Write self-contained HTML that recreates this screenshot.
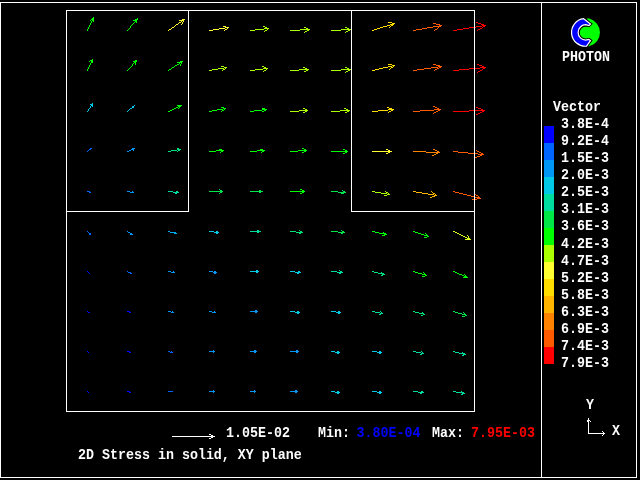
<!DOCTYPE html>
<html><head><meta charset="utf-8"><title>2D Stress in solid, XY plane</title>
<style>html,body{margin:0;padding:0;background:#000;overflow:hidden}svg{display:block}text{font-family:"Liberation Mono",monospace;font-weight:bold;font-size:13.333px;white-space:pre}</style></head><body>
<svg width="640" height="480" viewBox="0 0 640 480">
<rect width="640" height="480" fill="#000"/>
<g shape-rendering="crispEdges">
<path d="M93 17h1v1h-1zM92 18h2v1h-2zM91 19h3v1h-3zM90 20h1v1h-1zM92 20h2v1h-2zM91 21h1v1h-1zM93 21h1v1h-1zM91 22h1v1h-1zM90 23h1v1h-1zM90 24h1v1h-1zM89 25h1v1h-1zM89 26h1v1h-1zM88 27h1v1h-1zM88 28h1v1h-1zM87 29h1v1h-1zM87 30h1v1h-1z" fill="#00ff00"/>
<path d="M137 18h1v1h-1zM135 19h3v1h-3zM133 20h4v1h-4zM135 21h2v1h-2zM134 22h1v1h-1zM136 22h1v1h-1zM133 23h1v1h-1zM132 24h1v1h-1zM131 25h1v1h-1zM130 26h1v1h-1zM130 27h1v1h-1zM129 28h1v1h-1zM128 29h1v1h-1zM127 30h1v1h-1z" fill="#00ff00"/>
<path d="M182 19h3v1h-3zM179 20h5v1h-5zM181 21h1v1h-1zM183 21h1v1h-1zM179 22h2v1h-2zM182 22h1v1h-1zM178 23h1v1h-1zM182 23h1v1h-1zM176 24h2v1h-2zM181 24h1v1h-1zM175 25h1v1h-1zM174 26h1v1h-1zM172 27h2v1h-2zM171 28h1v1h-1zM169 29h2v1h-2zM168 30h1v1h-1z" fill="#ffff32"/>
<path d="M223 26h3v1h-3zM225 27h4v1h-4zM219 28h6v1h-6zM227 28h1v1h-1zM213 29h6v1h-6zM225 29h2v1h-2zM209 30h4v1h-4zM224 30h1v1h-1z" fill="#ffff32"/>
<path d="M263 26h2v1h-2zM265 27h2v1h-2zM264 28h5v1h-5zM255 29h9v1h-9zM267 29h1v1h-1zM250 30h5v1h-5zM265 30h2v1h-2zM264 31h1v1h-1z" fill="#aaff00"/>
<path d="M304 27h2v1h-2zM306 28h2v1h-2zM300 29h10v1h-10zM290 30h10v1h-10zM307 30h2v1h-2zM305 31h2v1h-2zM304 32h1v1h-1z" fill="#aaff00"/>
<path d="M345 27h2v1h-2zM347 28h2v1h-2zM341 29h10v1h-10zM331 30h10v1h-10zM348 30h2v1h-2zM346 31h2v1h-2zM345 32h1v1h-1z" fill="#aaff00"/>
<path d="M388 22h4v1h-4zM392 23h3v1h-3zM390 24h4v1h-4zM387 25h3v1h-3zM391 25h2v1h-2zM383 26h4v1h-4zM390 26h1v1h-1zM380 27h3v1h-3zM389 27h1v1h-1zM377 28h3v1h-3zM374 29h3v1h-3zM372 30h2v1h-2z" fill="#ffdc00"/>
<path d="M433 23h3v1h-3zM436 24h4v1h-4zM439 25h3v1h-3zM433 26h8v1h-8zM427 27h6v1h-6zM438 27h1v1h-1zM422 28h5v1h-5zM437 28h1v1h-1zM416 29h6v1h-6zM435 29h2v1h-2zM413 30h3v1h-3zM434 30h1v1h-1z" fill="#ff5a00"/>
<path d="M476 22h2v1h-2zM478 23h3v1h-3zM481 24h3v1h-3zM482 25h4v1h-4zM476 26h6v1h-6zM483 26h2v1h-2zM469 27h7v1h-7zM482 27h1v1h-1zM463 28h6v1h-6zM480 28h2v1h-2zM457 29h6v1h-6zM478 29h2v1h-2zM453 30h4v1h-4zM477 30h1v1h-1z" fill="#ff0000"/>
<path d="M92 59h1v1h-1zM90 60h3v1h-3zM89 61h1v1h-1zM91 61h2v1h-2zM91 62h2v1h-2zM90 63h1v1h-1zM90 64h1v1h-1zM89 65h1v1h-1zM89 66h1v1h-1zM88 67h1v1h-1zM88 68h1v1h-1zM87 69h1v1h-1zM87 70h1v1h-1z" fill="#00ff00"/>
<path d="M135 60h2v1h-2zM133 61h4v1h-4zM134 62h2v1h-2zM133 63h1v1h-1zM135 63h1v1h-1zM132 64h1v1h-1zM135 64h1v1h-1zM132 65h1v1h-1zM131 66h1v1h-1zM130 67h1v1h-1zM129 68h1v1h-1zM128 69h1v1h-1zM127 70h1v1h-1z" fill="#00ff00"/>
<path d="M180 61h3v1h-3zM177 62h5v1h-5zM179 63h1v1h-1zM181 63h1v1h-1zM177 64h2v1h-2zM180 64h1v1h-1zM175 65h2v1h-2zM180 65h1v1h-1zM174 66h1v1h-1zM172 67h2v1h-2zM171 68h1v1h-1zM169 69h2v1h-2zM168 70h1v1h-1z" fill="#00ff00"/>
<path d="M221 66h3v1h-3zM224 67h3v1h-3zM218 68h6v1h-6zM225 68h1v1h-1zM212 69h6v1h-6zM223 69h2v1h-2zM209 70h3v1h-3zM222 70h1v1h-1z" fill="#aaff00"/>
<path d="M262 66h2v1h-2zM264 67h2v1h-2zM263 68h5v1h-5zM255 69h8v1h-8zM266 69h1v1h-1zM250 70h5v1h-5zM264 70h2v1h-2zM263 71h1v1h-1z" fill="#aaff00"/>
<path d="M303 67h2v1h-2zM305 68h2v1h-2zM299 69h10v1h-10zM290 70h9v1h-9zM306 70h2v1h-2zM304 71h2v1h-2z" fill="#aaff00"/>
<path d="M345 67h2v1h-2zM347 68h2v1h-2zM341 69h10v1h-10zM331 70h10v1h-10zM348 70h2v1h-2zM346 71h2v1h-2zM345 72h1v1h-1z" fill="#aaff00"/>
<path d="M388 64h4v1h-4zM392 65h3v1h-3zM388 66h4v1h-4zM393 66h1v1h-1zM383 67h5v1h-5zM391 67h2v1h-2zM379 68h4v1h-4zM390 68h1v1h-1zM375 69h4v1h-4zM389 69h1v1h-1zM372 70h3v1h-3z" fill="#ffdc00"/>
<path d="M433 64h3v1h-3zM436 65h4v1h-4zM438 66h4v1h-4zM431 67h7v1h-7zM439 67h2v1h-2zM424 68h7v1h-7zM437 68h2v1h-2zM417 69h7v1h-7zM435 69h2v1h-2zM413 70h4v1h-4zM434 70h1v1h-1z" fill="#ff5a00"/>
<path d="M477 64h2v1h-2zM479 65h3v1h-3zM482 66h2v1h-2zM480 67h6v1h-6zM469 68h11v1h-11zM483 68h2v1h-2zM459 69h10v1h-10zM482 69h1v1h-1zM453 70h6v1h-6zM480 70h2v1h-2zM478 71h2v1h-2zM477 72h1v1h-1z" fill="#ff0000"/>
<path d="M92 103h1v1h-1zM90 104h3v1h-3zM91 105h2v1h-2zM90 106h1v1h-1zM92 106h1v1h-1zM90 107h1v1h-1zM89 108h1v1h-1zM88 109h1v1h-1zM88 110h1v1h-1zM87 111h1v1h-1z" fill="#00c8e6"/>
<path d="M134 105h1v1h-1zM132 106h2v1h-2zM132 107h2v1h-2zM130 108h2v1h-2zM129 109h1v1h-1zM128 110h1v1h-1zM127 111h1v1h-1z" fill="#00c8e6"/>
<path d="M177 105h5v1h-5zM178 106h3v1h-3zM176 107h2v1h-2zM179 107h1v1h-1zM174 108h2v1h-2zM178 108h1v1h-1zM172 109h2v1h-2zM170 110h2v1h-2zM168 111h2v1h-2z" fill="#00ff00"/>
<path d="M221 107h3v1h-3zM223 108h3v1h-3zM217 109h6v1h-6zM224 109h1v1h-1zM212 110h5v1h-5zM222 110h2v1h-2zM209 111h3v1h-3zM221 111h1v1h-1z" fill="#00ff00"/>
<path d="M262 108h3v1h-3zM262 109h5v1h-5zM254 110h8v1h-8zM264 110h2v1h-2zM250 111h4v1h-4zM262 111h2v1h-2z" fill="#00ff00"/>
<path d="M303 108h2v1h-2zM305 109h2v1h-2zM299 110h9v1h-9zM290 111h9v1h-9zM305 111h2v1h-2zM303 112h2v1h-2z" fill="#aaff00"/>
<path d="M344 108h2v1h-2zM346 109h2v1h-2zM340 110h10v1h-10zM331 111h9v1h-9zM347 111h2v1h-2zM345 112h2v1h-2z" fill="#aaff00"/>
<path d="M387 107h2v1h-2zM389 108h3v1h-3zM388 109h6v1h-6zM378 110h10v1h-10zM391 110h2v1h-2zM372 111h6v1h-6zM389 111h2v1h-2zM388 112h1v1h-1z" fill="#ffdc00"/>
<path d="M433 106h2v1h-2zM435 107h2v1h-2zM437 108h2v1h-2zM434 109h7v1h-7zM420 110h14v1h-14zM438 110h2v1h-2zM413 111h7v1h-7zM436 111h2v1h-2zM434 112h2v1h-2zM433 113h1v1h-1z" fill="#ff5a00"/>
<path d="M476 107h2v1h-2zM478 108h3v1h-3zM481 109h2v1h-2zM469 110h16v1h-16zM453 111h16v1h-16zM482 111h2v1h-2zM480 112h2v1h-2zM478 113h2v1h-2zM476 114h2v1h-2z" fill="#ff0000"/>
<path d="M90 148h2v1h-2zM89 149h2v1h-2zM88 150h1v1h-1zM87 151h1v1h-1z" fill="#0064ff"/>
<path d="M132 148h3v1h-3zM131 149h3v1h-3zM129 150h2v1h-2zM133 150h1v1h-1zM127 151h2v1h-2z" fill="#0096f5"/>
<path d="M177 148h2v1h-2zM177 149h4v1h-4zM171 150h6v1h-6zM178 150h2v1h-2zM168 151h3v1h-3zM177 151h1v1h-1z" fill="#00e07c"/>
<path d="M219 149h3v1h-3zM216 150h8v1h-8zM209 151h7v1h-7zM221 151h2v1h-2zM220 152h1v1h-1z" fill="#00ff00"/>
<path d="M260 149h3v1h-3zM257 150h8v1h-8zM250 151h7v1h-7zM262 151h2v1h-2zM261 152h1v1h-1z" fill="#00ff00"/>
<path d="M302 148h2v1h-2zM304 149h2v1h-2zM298 150h9v1h-9zM290 151h8v1h-8zM304 151h2v1h-2zM302 152h2v1h-2z" fill="#00ff00"/>
<path d="M343 149h2v1h-2zM345 150h2v1h-2zM331 151h17v1h-17zM345 152h2v1h-2zM343 153h2v1h-2z" fill="#00ff00"/>
<path d="M386 149h2v1h-2zM388 150h2v1h-2zM372 151h20v1h-20zM388 152h2v1h-2zM386 153h2v1h-2z" fill="#ffff32"/>
<path d="M433 149h2v1h-2zM435 150h2v1h-2zM413 151h13v1h-13zM437 151h2v1h-2zM426 152h14v1h-14zM436 153h2v1h-2zM434 154h2v1h-2zM432 155h2v1h-2z" fill="#ff8200"/>
<path d="M476 150h1v1h-1zM453 151h5v1h-5zM477 151h2v1h-2zM458 152h10v1h-10zM479 152h2v1h-2zM468 153h10v1h-10zM481 153h2v1h-2zM478 154h6v1h-6zM480 155h2v1h-2zM477 156h3v1h-3zM475 157h2v1h-2z" fill="#ff5a00"/>
<path d="M87 191h3v1h-3zM89 192h2v1h-2z" fill="#0064ff"/>
<path d="M127 191h3v1h-3zM132 191h1v1h-1zM130 192h4v1h-4z" fill="#0096f5"/>
<path d="M168 191h5v1h-5zM176 191h2v1h-2zM173 192h6v1h-6zM175 193h2v1h-2z" fill="#00dca0"/>
<path d="M219 189h1v1h-1zM220 190h2v1h-2zM209 191h14v1h-14zM220 192h2v1h-2zM219 193h1v1h-1z" fill="#00e646"/>
<path d="M259 190h2v1h-2zM250 191h13v1h-13zM259 192h2v1h-2z" fill="#00e646"/>
<path d="M300 189h2v1h-2zM302 190h2v1h-2zM290 191h15v1h-15zM302 192h2v1h-2zM300 193h2v1h-2z" fill="#00ff00"/>
<path d="M342 190h1v1h-1zM331 191h7v1h-7zM343 191h2v1h-2zM338 192h8v1h-8zM341 193h3v1h-3z" fill="#00e646"/>
<path d="M372 191h3v1h-3zM385 191h1v1h-1zM375 192h6v1h-6zM386 192h2v1h-2zM381 193h6v1h-6zM388 193h1v1h-1zM387 194h3v1h-3zM384 195h3v1h-3z" fill="#aaff00"/>
<path d="M413 191h3v1h-3zM431 191h1v1h-1zM416 192h6v1h-6zM432 192h1v1h-1zM422 193h6v1h-6zM433 193h2v1h-2zM428 194h6v1h-6zM435 194h1v1h-1zM434 195h3v1h-3zM432 196h3v1h-3zM430 197h2v1h-2z" fill="#ffb400"/>
<path d="M453 191h2v1h-2zM455 192h4v1h-4zM459 193h4v1h-4zM474 193h1v1h-1zM463 194h4v1h-4zM475 194h1v1h-1zM467 195h4v1h-4zM476 195h2v1h-2zM471 196h4v1h-4zM478 196h1v1h-1zM475 197h5v1h-5zM477 198h4v1h-4zM472 199h5v1h-5z" fill="#ff5a00"/>
<path d="M87 231h1v1h-1zM88 232h1v1h-1zM89 233h2v1h-2zM89 234h2v1h-2z" fill="#0064ff"/>
<path d="M127 231h1v1h-1zM128 232h2v1h-2zM130 233h2v1h-2zM130 234h3v1h-3z" fill="#0096f5"/>
<path d="M168 231h2v1h-2zM170 232h6v1h-6zM174 233h3v1h-3z" fill="#00aaef"/>
<path d="M209 231h5v1h-5zM216 231h2v1h-2zM214 232h5v1h-5zM216 233h2v1h-2z" fill="#00c8e6"/>
<path d="M257 230h2v1h-2zM250 231h11v1h-11zM257 232h2v1h-2z" fill="#00dca0"/>
<path d="M299 230h1v1h-1zM290 231h6v1h-6zM300 231h2v1h-2zM296 232h7v1h-7zM299 233h2v1h-2z" fill="#00e173"/>
<path d="M341 230h1v1h-1zM331 231h7v1h-7zM342 231h2v1h-2zM338 232h7v1h-7zM341 233h2v1h-2z" fill="#00e646"/>
<path d="M372 231h3v1h-3zM375 232h4v1h-4zM383 232h1v1h-1zM379 233h7v1h-7zM384 234h3v1h-3zM382 235h3v1h-3z" fill="#00ff00"/>
<path d="M413 231h2v1h-2zM415 232h3v1h-3zM418 233h3v1h-3zM425 233h1v1h-1zM421 234h3v1h-3zM426 234h1v1h-1zM424 235h4v1h-4zM427 236h2v1h-2zM424 237h3v1h-3z" fill="#00ff00"/>
<path d="M453 231h2v1h-2zM455 232h2v1h-2zM457 233h2v1h-2zM459 234h2v1h-2zM461 235h2v1h-2zM467 235h1v1h-1zM463 236h2v1h-2zM468 236h1v1h-1zM465 237h2v1h-2zM468 237h1v1h-1zM467 238h3v1h-3zM465 239h6v1h-6z" fill="#ddff1e"/>
<path d="M87 271h1v1h-1zM88 272h1v1h-1zM89 273h1v1h-1z" fill="#0000ff"/>
<path d="M127 271h1v1h-1zM128 272h3v1h-3zM130 273h2v1h-2z" fill="#0064ff"/>
<path d="M168 271h3v1h-3zM173 271h1v1h-1zM171 272h4v1h-4z" fill="#0096f5"/>
<path d="M209 271h4v1h-4zM214 271h2v1h-2zM213 272h4v1h-4zM214 273h2v1h-2z" fill="#0096f5"/>
<path d="M256 270h2v1h-2zM250 271h9v1h-9zM256 272h2v1h-2z" fill="#00c8e6"/>
<path d="M290 271h5v1h-5zM298 271h2v1h-2zM295 272h6v1h-6zM297 273h2v1h-2z" fill="#00c8e6"/>
<path d="M339 270h1v1h-1zM331 271h6v1h-6zM340 271h2v1h-2zM337 272h6v1h-6zM339 273h2v1h-2z" fill="#00dca0"/>
<path d="M372 271h2v1h-2zM374 272h4v1h-4zM381 272h1v1h-1zM378 273h6v1h-6zM382 274h3v1h-3zM381 275h2v1h-2z" fill="#00e07c"/>
<path d="M413 271h2v1h-2zM415 272h3v1h-3zM423 272h1v1h-1zM418 273h4v1h-4zM424 273h1v1h-1zM422 274h4v1h-4zM425 275h2v1h-2zM422 276h3v1h-3z" fill="#00ff00"/>
<path d="M453 271h2v1h-2zM455 272h2v1h-2zM457 273h2v1h-2zM459 274h3v1h-3zM464 274h1v1h-1zM462 275h2v1h-2zM465 275h1v1h-1zM464 276h3v1h-3zM463 277h5v1h-5z" fill="#00ff00"/>
<path d="M87 311h1v1h-1zM88 312h2v1h-2z" fill="#0000ff"/>
<path d="M127 311h3v1h-3zM129 312h2v1h-2z" fill="#0000ff"/>
<path d="M168 311h3v1h-3zM172 311h1v1h-1zM171 312h3v1h-3z" fill="#0096f5"/>
<path d="M209 311h3v1h-3zM214 311h1v1h-1zM212 312h4v1h-4z" fill="#0096f5"/>
<path d="M255 310h2v1h-2zM250 311h8v1h-8zM255 312h2v1h-2z" fill="#0096f5"/>
<path d="M290 311h5v1h-5zM297 311h2v1h-2zM295 312h5v1h-5zM297 313h2v1h-2z" fill="#00c8e6"/>
<path d="M331 311h5v1h-5zM338 311h2v1h-2zM336 312h5v1h-5zM338 313h2v1h-2z" fill="#00c8e6"/>
<path d="M372 311h3v1h-3zM380 311h1v1h-1zM375 312h5v1h-5zM381 312h1v1h-1zM380 313h3v1h-3zM379 314h2v1h-2z" fill="#00dca0"/>
<path d="M413 311h2v1h-2zM415 312h4v1h-4zM422 312h1v1h-1zM419 313h5v1h-5zM423 314h2v1h-2zM421 315h2v1h-2z" fill="#00e173"/>
<path d="M453 311h2v1h-2zM455 312h3v1h-3zM463 312h1v1h-1zM458 313h4v1h-4zM464 313h1v1h-1zM462 314h4v1h-4zM465 315h2v1h-2zM462 316h3v1h-3z" fill="#00e646"/>
<path d="M87 351h1v1h-1zM88 352h1v1h-1z" fill="#0000ff"/>
<path d="M127 351h3v1h-3zM129 352h2v1h-2z" fill="#0000ff"/>
<path d="M168 351h2v1h-2zM171 351h1v1h-1zM170 352h3v1h-3z" fill="#0064ff"/>
<path d="M213 350h1v1h-1zM209 351h6v1h-6zM213 352h1v1h-1z" fill="#0096f5"/>
<path d="M254 350h2v1h-2zM250 351h7v1h-7zM254 352h2v1h-2z" fill="#0096f5"/>
<path d="M296 350h2v1h-2zM290 351h9v1h-9zM296 352h2v1h-2z" fill="#0096f5"/>
<path d="M331 351h4v1h-4zM337 351h2v1h-2zM335 352h5v1h-5zM337 353h2v1h-2z" fill="#00c8e6"/>
<path d="M372 351h5v1h-5zM379 351h2v1h-2zM377 352h5v1h-5zM379 353h2v1h-2z" fill="#00c8e6"/>
<path d="M413 351h3v1h-3zM421 351h1v1h-1zM416 352h5v1h-5zM422 352h1v1h-1zM421 353h3v1h-3zM420 354h2v1h-2z" fill="#00dca0"/>
<path d="M453 351h2v1h-2zM455 352h4v1h-4zM462 352h1v1h-1zM459 353h6v1h-6zM463 354h3v1h-3zM462 355h2v1h-2z" fill="#00dca0"/>
<path d="M87 391h1v1h-1zM88 392h1v1h-1z" fill="#0000ff"/>
<path d="M127 391h3v1h-3zM129 392h2v1h-2z" fill="#0000ff"/>
<path d="M168 391h5v1h-5z" fill="#0064ff"/>
<path d="M213 390h1v1h-1zM209 391h6v1h-6zM213 392h1v1h-1z" fill="#0096f5"/>
<path d="M254 390h1v1h-1zM250 391h6v1h-6zM254 392h1v1h-1z" fill="#0096f5"/>
<path d="M295 390h2v1h-2zM290 391h8v1h-8zM295 392h2v1h-2z" fill="#0096f5"/>
<path d="M331 391h4v1h-4zM337 391h2v1h-2zM335 392h5v1h-5zM337 393h2v1h-2z" fill="#00c8e6"/>
<path d="M372 391h5v1h-5zM379 391h2v1h-2zM377 392h5v1h-5zM379 393h2v1h-2z" fill="#00c8e6"/>
<path d="M413 391h5v1h-5zM421 391h2v1h-2zM418 392h6v1h-6zM420 393h2v1h-2z" fill="#00dca0"/>
<path d="M453 391h3v1h-3zM461 391h1v1h-1zM456 392h8v1h-8zM462 393h3v1h-3zM461 394h2v1h-2z" fill="#00dca0"/>
</g>
<g fill="#fff" shape-rendering="crispEdges">
<rect x="0" y="2" width="637" height="1"/>
<rect x="0" y="477" width="637" height="1"/>
<rect x="0" y="2" width="1" height="476"/>
<rect x="636" y="2" width="1" height="476"/>
<rect x="541" y="2" width="1" height="476"/>
<rect x="66" y="10" width="409" height="1"/>
<rect x="66" y="411" width="409" height="1"/>
<rect x="66" y="10" width="1" height="402"/>
<rect x="474" y="10" width="1" height="402"/>
<rect x="66" y="211" width="123" height="1"/>
<rect x="188" y="10" width="1" height="202"/>
<rect x="351" y="211" width="124" height="1"/>
<rect x="351" y="10" width="1" height="202"/>
</g>
<path d="M209 434h2v1h-2zM211 435h2v1h-2zM172 436h43v1h-43zM211 437h2v1h-2zM209 438h2v1h-2zM588 418h1v1h-1zM588 419h1v1h-1zM587 420h3v1h-3zM587 421h2v1h-2zM590 421h1v1h-1zM588 422h1v1h-1zM588 423h1v1h-1zM588 424h1v1h-1zM588 425h1v1h-1zM588 426h1v1h-1zM588 427h1v1h-1zM588 428h1v1h-1zM588 429h1v1h-1zM588 430h1v1h-1zM588 431h1v1h-1zM602 431h1v1h-1zM588 432h1v1h-1zM603 432h1v1h-1zM588 433h17v1h-17zM603 434h1v1h-1zM602 435h1v1h-1z" fill="#fff" shape-rendering="crispEdges"/>
<g shape-rendering="crispEdges">
<rect x="544" y="126" width="10" height="17" fill="#0000ff"/>
<rect x="544" y="143" width="10" height="17" fill="#0064ff"/>
<rect x="544" y="160" width="10" height="17" fill="#0096f5"/>
<rect x="544" y="177" width="10" height="17" fill="#00c8e6"/>
<rect x="544" y="194" width="10" height="17" fill="#00dca0"/>
<rect x="544" y="211" width="10" height="17" fill="#00e646"/>
<rect x="544" y="228" width="10" height="17" fill="#00ff00"/>
<rect x="544" y="245" width="10" height="17" fill="#aaff00"/>
<rect x="544" y="262" width="10" height="17" fill="#ffff32"/>
<rect x="544" y="279" width="10" height="17" fill="#ffdc00"/>
<rect x="544" y="296" width="10" height="17" fill="#ffb400"/>
<rect x="544" y="313" width="10" height="17" fill="#ff8200"/>
<rect x="544" y="330" width="10" height="17" fill="#ff5a00"/>
<rect x="544" y="347" width="10" height="17" fill="#ff0000"/>
</g>
<g opacity="0.999">
<text transform="translate(553,111) scale(1,1.14)" fill="#fff">Vector</text>
<text transform="translate(561,128) scale(1,1.14)" fill="#fff">3.8E-4</text>
<text transform="translate(561,145) scale(1,1.14)" fill="#fff">9.2E-4</text>
<text transform="translate(561,162) scale(1,1.14)" fill="#fff">1.5E-3</text>
<text transform="translate(561,179) scale(1,1.14)" fill="#fff">2.0E-3</text>
<text transform="translate(561,196) scale(1,1.14)" fill="#fff">2.5E-3</text>
<text transform="translate(561,213) scale(1,1.14)" fill="#fff">3.1E-3</text>
<text transform="translate(561,230) scale(1,1.14)" fill="#fff">3.6E-3</text>
<text transform="translate(561,248) scale(1,1.14)" fill="#fff">4.2E-3</text>
<text transform="translate(561,265) scale(1,1.14)" fill="#fff">4.7E-3</text>
<text transform="translate(561,282) scale(1,1.14)" fill="#fff">5.2E-3</text>
<text transform="translate(561,299) scale(1,1.14)" fill="#fff">5.8E-3</text>
<text transform="translate(561,316) scale(1,1.14)" fill="#fff">6.3E-3</text>
<text transform="translate(561,333) scale(1,1.14)" fill="#fff">6.9E-3</text>
<text transform="translate(561,350) scale(1,1.14)" fill="#fff">7.4E-3</text>
<text transform="translate(561,367) scale(1,1.14)" fill="#fff">7.9E-3</text>
<text transform="translate(562,61) scale(1,1.14)" fill="#fff">PHOTON</text>
<text transform="translate(586,409) scale(1,1.14)" fill="#fff">Y</text>
<text transform="translate(612,435) scale(1,1.14)" fill="#fff">X</text>
<text transform="translate(226,437) scale(1,1.14)" fill="#fff">1.05E-02</text>
<text transform="translate(318,437) scale(1,1.14)" fill="#fff">Min:</text>
<text transform="translate(356.5,437) scale(1,1.14)" fill="#0000ff">3.80E-04</text>
<text transform="translate(432,437) scale(1,1.14)" fill="#fff">Max:</text>
<text transform="translate(471,437) scale(1,1.14)" fill="#ff0000">7.95E-03</text>
<text transform="translate(78,459) scale(1,1.14)" fill="#fff">2D Stress in solid, XY plane</text>
</g>
<g id="logo">
<path d="M586.5 18.6 L589.28 18.49 A14.4 14.4 0 0 1 589.28 46.31 L586.5 46.2 L590.5 40.6 L589.8 39 L586 39 A6.2 6.2 0 0 1 586 26.4 L589.8 26.4 L590.5 24 Z" fill="#00ff00"/>
<path d="M583.62 18.68 L590.5 24 L588.9 25.6 L585.82 24.70 A7.7 7.7 0 0 0 585.82 40.10 L588.7 39.4 L590.5 40.6 L586.52 46.22 A13.85 13.85 0 0 1 583.62 18.68 Z" fill="none" stroke="#000" stroke-width="3"/>
<path d="M583.62 18.68 L590.5 24 L588.9 25.6 L585.82 24.70 A7.7 7.7 0 0 0 585.82 40.10 L588.7 39.4 L590.5 40.6 L586.52 46.22 A13.85 13.85 0 0 1 583.62 18.68 Z" fill="#0000ff" stroke="#fff" stroke-width="1.2"/>
</g>
</svg></body></html>
